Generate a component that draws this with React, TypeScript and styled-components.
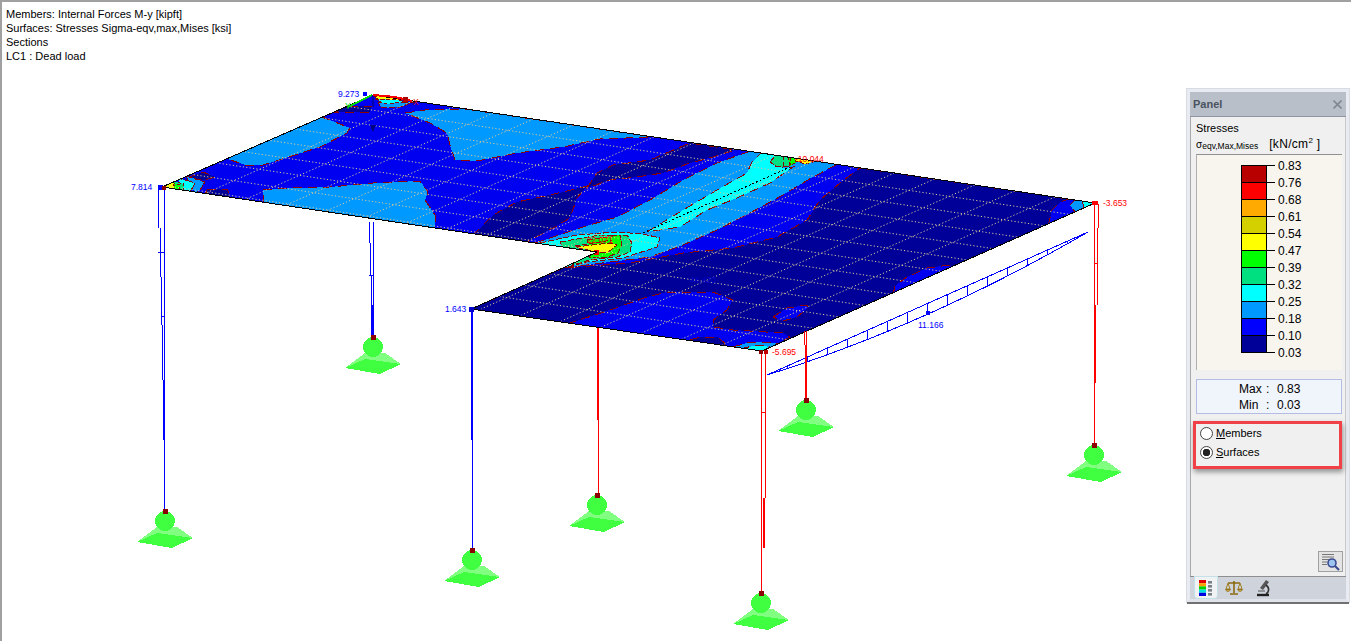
import styled, { createGlobalStyle } from "styled-components"

const GlobalStyle = createGlobalStyle`
    html, body, #root { margin: 0; padding: 0; height: 100%; }
    body { background: #fff; overflow: hidden; font-family: "Liberation Sans", Arial, sans-serif; }
`

type Region = { points: string; fill: string; dash?: string }

const OUTLINE = "373,95 1095,203 762,351 471,309 565,267 597,252 535,243 162,187"

const REGIONS: Region[] = [
    // light areas on the back plate
    { fill: "#0099ff", points: "405,113 425,110 465,109 653,137 600,139 563,147 517,153 477,161 455,160 450,145 447,133 430,123" },
    { fill: "#0099ff", points: "322,117 340,124 350,128 347,133 320,147 263,165 245,165 225,158" },
    { fill: "#0099ff", points: "263,190 287,188 330,187 373,183 420,181 428,192 425,200 435,215 435,232 263,206" },
    // navy pockets
    { fill: "#000099", points: "587,188 597,173 613,165 650,160 690,143 735,150 713,157 690,163 663,173 637,177 610,180" },
    { fill: "#000099", points: "473,235 493,215 517,202 563,192 587,186 577,198 570,218 553,228 525,243" },
    { fill: "#000099", points: "336,112 345,106 372,106 370,112" },
    { fill: "#000099", points: "187,178 203,172 215,177 205,180" },
    { fill: "#000099", points: "207,190 227,189 232,200 205,195" },
    // front plate
    { fill: "#000099", points: "860,168 1095,203 762,351 471,309 563,268 630,263 683,253 733,248 777,237 807,220 820,200 840,183" },
    { fill: "#0000f0", points: "567,324 610,310 647,297 667,292 713,292 733,300 727,310 713,320 713,327 733,330 783,333 790,337 772,346 762,353" },
    { fill: "#000099", points: "690,340 700,337 717,337 725,343 722,348" },
    { fill: "#0000f0", points: "773,317 787,308 807,305 808,308 797,317 783,321" },
    { fill: "#0000f0", points: "893,295 895,286 907,277 927,268 950,265 952,269" },
    { fill: "#0099ff", points: "733,347 750,342 777,343 767,353" },
    { fill: "#00ffff", points: "740,349 757,345 770,347 760,352" },
    // right corner
    { fill: "#0000f0", points: "1048,226 1052,210 1060,202 1072,198 1080,214" },
    { fill: "#0099ff", points: "1070,205 1077,198 1083,200 1086,207 1075,212" },
    { fill: "#00ffff", points: "1082,199 1097,203 1084,209" },
    // central band
    { fill: "#0099ff", points: "535,243 583,227 617,217 650,200 683,180 717,163 753,150 840,163 813,177 783,195 750,213 717,230 683,245 650,257 610,262 563,268" },
    { fill: "#00ffff", points: "647,232 683,210 717,190 747,173 752,162 763,151 775,152 783,168 793,167 770,183 737,198 707,210 680,227 660,230" },
    { fill: "#00ffff", points: "540,243 577,235 617,232 643,234 660,238 657,247 623,258 587,262 563,268", dash: "6 2" },
    { fill: "#00e080", points: "770,162 777,154 790,155 795,162 790,166 777,167", dash: "6 2" },
    { fill: "#00ff00", points: "788,157 800,160 790,166", dash: "4 2" },
    { fill: "#ffff00", points: "795,157 820,160 805,164 795,161", dash: "4 2" },
    { fill: "#00e080", points: "560,242 600,235 627,235 632,243 630,252 617,257 590,260 573,265", dash: "6 2" },
    { fill: "#00ff00", points: "587,240 620,235 622,245 618,253 607,257 590,258", dash: "6 2" },
    { fill: "#ffff00", points: "575,247 610,243 617,245 607,253 597,252", dash: "6 2" },
    // left corner
    { fill: "#0099ff", points: "186,176 205,182 200,190 195,193", dash: "6 2" },
    { fill: "#00ffff", points: "178,178 195,183 190,192 181,190", dash: "4 2" },
    { fill: "#00e080", points: "173,181 184,184 183,191 176,190", dash: "3 2" },
    { fill: "#00ff00", points: "172,183 180,185 179,190 174,189", dash: "3 2" },
    { fill: "#ffff00", points: "162,187 173,181 175,190", dash: "2 2" },
    // top corner
    { fill: "#0099ff", points: "378,103 386,102 414,102 400,107 382,108", dash: "6 2" },
    { fill: "#00ffff", points: "375,99 395,99 405,102 385,104", dash: "4 2" },
    { fill: "#ffff00", points: "373,96 393,97 402,100 378,99", dash: "4 2" }
]

const SUPPORTS: [number, number][] = [[165, 511], [373, 337], [472, 550], [597, 495], [761, 593], [806, 400], [1094, 445]]

const LEGEND = ["#b80000", "#ff0000", "#ffaa00", "#d4d000", "#ffff00", "#00ff00", "#00e080", "#00ffff", "#0099ff", "#0000ff", "#000099"]
const VALUES = ["0.83", "0.76", "0.68", "0.61", "0.54", "0.47", "0.39", "0.32", "0.25", "0.18", "0.10", "0.03"]

// grid lines of the mesh, plain parallel projection
const gridLines = () => {
    const out: string[] = []
    const a = [373, 95], ab = [722, 108], ad = [-333, 148]
    for (let i = 1; i < 18; i++) {
        const x = a[0] + ab[0] * i / 18, y = a[1] + ab[1] * i / 18
        out.push(`M${x} ${y}L${x + ad[0]} ${y + ad[1]}`)
    }
    for (let i = 1; i < 13; i++) {
        const x = a[0] + ad[0] * i / 13, y = a[1] + ad[1] * i / 13
        out.push(`M${x} ${y}L${x + ab[0]} ${y + ab[1]}`)
    }
    return out.join("")
}

// member diagram of the long beam: straight axis, parabola below
const beam = () => {
    const x0 = 767, y0 = 375, x1 = 1088, y1 = 232
    let bottom = `M${x0} ${y0}`, rungs = ""
    for (let i = 1; i <= 16; i++) {
        const t = i / 16
        const x = x0 + (x1 - x0) * t, y = y0 + (y1 - y0) * t
        const d = 43 * t * (1 - t)
        bottom += `L${x} ${y + d}`
        if (i < 16) rungs += `M${x} ${y}V${y + d}`
    }
    return { axis: `M${x0} ${y0}L${x1} ${y1}`, bottom, rungs }
}

const Support = ({ x, y }: { x: number; y: number }) => (
    <g shapeRendering="crispEdges">
        <polygon points={`${x - 28},${y + 31} ${x - 8},${y + 16} ${x + 12},${y + 16} ${x + 28},${y + 27} ${x + 7},${y + 37}`} fill="#80ff80" />
        <polygon points={`${x - 28},${y + 31} ${x - 8},${y + 22} ${x + 28},${y + 27} ${x + 7},${y + 37}`} fill="#40ff40" />
        <circle cx={x} cy={y + 10} r={10} fill="#40ff40" />
        <rect x={x - 2.5} y={y - 2} width={5} height={5} fill="#8b0000" />
    </g>
)

const Scene = () => {
    const b = beam()
    return (
        <Drawing viewBox="0 0 1351 641" width={1351} height={641}>
            <defs>
                <clipPath id="plate"><polygon points={OUTLINE} /></clipPath>
            </defs>
            <g clipPath="url(#plate)" shapeRendering="crispEdges">
                <polygon points={OUTLINE} fill="#0000f0" />
                {REGIONS.map((r, i) => (
                    <polygon key={i} points={r.points} fill={r.fill} stroke="#8c0000" strokeWidth={1} strokeDasharray={r.dash ?? "9 6"} />
                ))}
                <path d={gridLines()} fill="none" stroke="#d8c898" strokeWidth={1} strokeDasharray="1.2 2.2" shapeRendering="auto" />
                <path d="M643 233L790 167" fill="none" stroke="#000" strokeWidth={1} strokeDasharray="2 2" />
                <path d="M560 260L600 252M575 246L612 240M783 155V166M790 156V165" stroke="#8c0000" strokeDasharray="5 2" fill="none" />
                <rect x={594} y={250} width={5} height={5} fill="#ff0000" />
            </g>
            <polygon points={OUTLINE} fill="none" stroke="#000" strokeWidth={1} shapeRendering="crispEdges" />

            <g fill="none" stroke="#0000ff" strokeWidth={1} shapeRendering="crispEdges">
                <path d="M164 188V511M158 188V228M160 228V277M161 277V325M162 325V380M163 380V440M158 252H164M161 316H164" />
                <path d="M373 222V337M369 222V243M370 243V275M371 275V305M369 275H373" />
                <path d="M372 305V337" strokeWidth={2} />
                <path d="M471.5 309V440" strokeWidth={2} />
                <path d="M472 440V550" />
                <path d={b.axis} />
                <path d={b.bottom} />
                <path d={b.rungs} />
            </g>
            <g fill="none" stroke="#ff0000" strokeWidth={1} shapeRendering="crispEdges">
                <path d="M598 328V420" strokeWidth={2} />
                <path d="M598 420V495" />
                <path d="M761 352V593M765 352V498M761 412H765" />
                <path d="M764 498V548" strokeWidth={2} />
                <path d="M806 345V400" strokeWidth={2} />
                <path d="M806 331V345M804 331V345" />
                <path d="M1094 204V445M1098 204V228M1097 228V305M1094 263H1097" />
                <path d="M1095 305V383" strokeWidth={2} />
            </g>

            {SUPPORTS.map(([x, y]) => <Support key={x} x={x} y={y} />)}

            <g shapeRendering="crispEdges">
                <rect x={158} y={185} width={5} height={5} fill="#0000ff" />
                <rect x={162} y={186} width={4} height={4} fill="#8b0000" />
                <rect x={363} y={92} width={4} height={4} fill="#0000ff" />
                <rect x={469} y={307} width={5} height={5} fill="#0000cc" />
                <rect x={759} y={350} width={4} height={4} fill="#8b0000" />
                <rect x={764} y={350} width={4} height={4} fill="#c00000" />
                <rect x={1092} y={201} width={6} height={4} fill="#ff0000" />
                <rect x={926} y={311} width={4} height={4} fill="#0000ff" />
                <path d="M373 95V107" stroke="#0000aa" strokeWidth={2} fill="none" />
                <polygon points="370,125 376,125 373,132" fill="#000080" />
                <path d="M373 95L395 97L412 101" stroke="#ff0000" strokeWidth={2} fill="none" />
                <rect x={403} y={97} width={5} height={5} fill="#b00000" />
                <path d="M348 107L372 95" stroke="#00e000" strokeWidth={2} fill="none" />
            </g>

            <SceneLabel x={131} y={190} $color="#0000ff">7.814</SceneLabel>
            <SceneLabel x={338} y={97} $color="#0000ff">9.273</SceneLabel>
            <SceneLabel x={445} y={312} $color="#0000ff">1.643</SceneLabel>
            <SceneLabel x={918} y={328} $color="#0000ff">11.166</SceneLabel>
            <SceneLabel x={690} y={283} $color="#0000cc">44.420</SceneLabel>
            <SceneLabel x={772} y={355} $color="#ff0000">-5.695</SceneLabel>
            <SceneLabel x={1103} y={206} $color="#ff0000">-3.653</SceneLabel>
            <SceneLabel x={795} y={162} $color="#ff0000">-10.044</SceneLabel>
            <SceneLabel x={587} y={243} $color="#ff0000">22.071</SceneLabel>
            <SceneLabel x={345} y={109} $color="#00d000">Y</SceneLabel>
            <SceneLabel x={413} y={105} $color="#e00000">X</SceneLabel>
        </Drawing>
    )
}

const LegendIcon = () => (
    <svg width="16" height="18" viewBox="0 0 16 18">
        {["#e00000", "#ffa000", "#00d000", "#00e0e0", "#0000e0"].map((c, i) => (
            <rect key={c} x="1" y={1 + i * 3.2} width="7" height="3.2" fill={c} />
        ))}
        {[0, 1, 2, 3].map(i => <rect key={i} x="10" y={2 + i * 4} width="4" height="2.6" fill="#7a8088" />)}
    </svg>
)

const ScalesIcon = () => (
    <svg width="18" height="16" viewBox="0 0 18 16" fill="none">
        <path d="M9 1V13M3 3H15M5 14H13" stroke="#8a6a10" strokeWidth="1.6" />
        <path d="M3 3L1 9H5ZM15 3L13 9H17Z" stroke="#a08020" strokeWidth="1" />
        <path d="M0.5 9.5C1.5 12 4.5 12 5.5 9.5ZM12.5 9.5C13.5 12 16.5 12 17.5 9.5Z" fill="#d8b040" stroke="#7a5c10" strokeWidth=".7" />
    </svg>
)

const MicroscopeIcon = () => (
    <svg width="16" height="18" viewBox="0 0 16 18" fill="none">
        <path d="M11 1L14 3L8 11L5 9Z" fill="#555" />
        <path d="M3 12H10" stroke="#777" strokeWidth="1.4" />
        <path d="M11 6C15 9 14 13 11 15" stroke="#333" strokeWidth="1.6" />
        <path d="M2 16H14" stroke="#222" strokeWidth="2.4" />
    </svg>
)

const FindIcon = () => (
    <svg width="20" height="18" viewBox="0 0 20 18" fill="none">
        <path d="M1 1.5H13M1 4H13M1 6.5H8M1 9H6M1 11.5H6" stroke="#777" strokeWidth="1" />
        <circle cx="11" cy="10" r="4" fill="#9cc4f0" stroke="#3a4a90" strokeWidth="1.6" />
        <path d="M14 13L18 17" stroke="#3a4a90" strokeWidth="2.2" />
    </svg>
)

const App = () => (
    <>
        <GlobalStyle />
        <Viewport>
            <Scene />
            <Info>
                <div>Members: Internal Forces M-y [kipft]</div>
                <div>Surfaces: Stresses Sigma-eqv,max,Mises [ksi]</div>
                <div>Sections</div>
                <div>LC1 : Dead load</div>
            </Info>
            <Panel>
                <TitleBar>
                    <span>Panel</span>
                    <svg width="9" height="9" viewBox="0 0 9 9"><path d="M0.5 0.5L8.5 8.5M8.5 0.5L0.5 8.5" stroke="#808890" strokeWidth="1.6" /></svg>
                </TitleBar>
                <Body>
                    <Heading>Stresses</Heading>
                    <Quantity>
                        <small>σ<sub>eqv,Max,Mises</sub></small>
                        <span>[kN/cm<sup>2</sup> ]</span>
                    </Quantity>
                    <LegendBox>
                        <ColorBar>
                            {LEGEND.map(c => <Swatch key={c} $color={c} />)}
                        </ColorBar>
                        <Ticks>
                            {VALUES.map(v => <Tick key={v}>{v}</Tick>)}
                        </Ticks>
                    </LegendBox>
                    <Extremes>
                        <ExtremeRow><b>Max</b><i>:</i><span>0.83</span></ExtremeRow>
                        <ExtremeRow><b>Min</b><i>:</i><span>0.03</span></ExtremeRow>
                    </Extremes>
                    <Radios>
                        <RadioRow>
                            <Radio />
                            <span><u>M</u>embers</span>
                        </RadioRow>
                        <RadioRow>
                            <Radio $checked />
                            <span><u>S</u>urfaces</span>
                        </RadioRow>
                    </Radios>
                    <Spacer />
                    <FindButton><FindIcon /></FindButton>
                </Body>
                <Tabs>
                    <Tab $active><LegendIcon /></Tab>
                    <Tab><ScalesIcon /></Tab>
                    <Tab $wide><MicroscopeIcon /></Tab>
                </Tabs>
            </Panel>
        </Viewport>
    </>
)

export default App

const Viewport = styled.div`
    position: relative;
    width: 1351px;
    height: 641px;
    box-sizing: border-box;
    border-top: 2px solid #a0a0a0;
    border-left: 2px solid #a0a0a0;
    overflow: hidden;
    background: #fff;
`

const Drawing = styled.svg`
    display: block;
    margin: -2px 0 0 -2px;
`

const SceneLabel = styled.text<{ $color: string }>`
    font-family: "Liberation Sans", Arial, sans-serif;
    font-size: 8.5px;
    fill: ${({ $color }) => $color};
`

const Info = styled.div`
    position: absolute;
    left: 4px;
    top: 5px;
    font-size: 11px;
    line-height: 14px;
    color: #000;
`

const Panel = styled.div`
    position: absolute;
    left: 1185px;
    top: 87px;
    width: 162px;
    height: 513px;
    box-sizing: border-box;
    display: flex;
    flex-direction: column;
    border: 3px solid #e8ecf2;
    border-bottom-color: #e0e4ea;
    box-shadow: 0 2px 0 #707070, 0 0 0 1px #d8dce2;
    background: #f0f0f0;
    font-size: 12px;
    color: #000;
`

const TitleBar = styled.div`
    flex: 0 0 24px;
    display: flex;
    align-items: center;
    justify-content: space-between;
    padding: 0 4px 0 3px;
    background: #b9bfc9;
    color: #4a5360;
    font-size: 11px;
    font-weight: bold;
    border-bottom: 1px solid #8e96a2;
`

const Body = styled.div`
    flex: 1;
    display: flex;
    flex-direction: column;
    padding: 4px 3px 4px 5px;
    border-left: 1px solid #a8a8a8;
    border-right: 1px solid #c8c8c8;
    min-height: 0;
`

const Heading = styled.div`
    font-size: 11px;
    line-height: 14px;
`

const Quantity = styled.div`
    display: flex;
    align-items: baseline;
    gap: 11px;
    height: 19px;
    line-height: 19px;
    white-space: nowrap;
    small { font-size: 10px; }
    sub { font-size: 8.5px; vertical-align: -1px; }
    span { font-size: 12px; letter-spacing: 0.3px; }
    sup { font-size: 8px; line-height: 0; }
`

const LegendBox = styled.div`
    flex: 0 0 216px;
    box-sizing: border-box;
    display: flex;
    align-items: flex-start;
    padding: 2px 0 0 44px;
    background: #f8f5ef;
    border-top: 1px solid #909090;
    border-left: 1px solid #b0b0b0;
`

const ColorBar = styled.div`
    display: flex;
    flex-direction: column;
    width: 24px;
    margin-top: 8px;
    border: 1px solid #000;
    border-bottom: 0;
`

const Swatch = styled.div<{ $color: string }>`
    height: 16px;
    background: ${({ $color }) => $color};
    border-bottom: 1px solid #000;
`

const Ticks = styled.div`
    display: flex;
    flex-direction: column;
`

const Tick = styled.div`
    display: flex;
    align-items: center;
    height: 17px;
    font-size: 12px;
    &::before {
        content: "";
        width: 8px;
        height: 1px;
        margin-right: 3px;
        background: #000;
    }
`

const Extremes = styled.div`
    margin-top: 9px;
    height: 35px;
    box-sizing: border-box;
    padding-top: 1px;
    background: #f0f4fb;
    border: 1px solid #b4bce4;
    font-size: 12px;
`

const ExtremeRow = styled.div`
    display: grid;
    grid-template-columns: 27px 11px 40px;
    line-height: 16px;
    padding-left: 42px;
    b { font-weight: normal; }
    i { font-style: normal; }
`

const Radios = styled.div`
    margin: 7px 0 0 -3px;
    width: 149px;
    height: 48px;
    box-sizing: border-box;
    display: flex;
    flex-direction: column;
    justify-content: center;
    gap: 5px;
    padding: 0 0 5px 4px;
    border: 3px solid #f04048;
    box-shadow: 1px 3px 5px rgba(0, 0, 0, 0.4);
    font-size: 11px;
`

const RadioRow = styled.label`
    display: flex;
    align-items: center;
    gap: 3px;
    height: 14px;
`

const Radio = styled.span<{ $checked?: boolean }>`
    width: 13px;
    height: 13px;
    box-sizing: border-box;
    border-radius: 50%;
    border: 1px solid #444;
    background: radial-gradient(circle, ${({ $checked }) => ($checked ? "#222 0 3.5px, #fff 4px" : "#fff 0 100%")});
`

const Spacer = styled.div`
    flex: 1;
`

const FindButton = styled.div`
    align-self: flex-end;
    width: 25px;
    height: 21px;
    box-sizing: border-box;
    display: flex;
    align-items: center;
    justify-content: center;
    background: #e4e4e4;
    border: 1px solid #a0a0a0;
    margin-right: -1px;
`

const Tabs = styled.div`
    flex: 0 0 23px;
    box-sizing: border-box;
    display: flex;
    align-items: flex-start;
    gap: 4px;
    padding-left: 5px;
    background: #cfd4dc;
    border-top: 1px solid #8e8e8e;
`

const Tab = styled.div<{ $active?: boolean; $wide?: boolean }>`
    width: 22px;
    height: 21px;
    margin-right: ${({ $active }) => ($active ? "2px" : "0")};
    margin-left: ${({ $wide }) => ($wide ? "3px" : "0")};
    display: flex;
    align-items: center;
    justify-content: center;
    background: ${({ $active }) => ($active ? "#f0f2f4" : "transparent")};
    border-radius: 0 0 3px 3px;
    box-shadow: ${({ $active }) => ($active ? "0 0 0 1px #c4e0e8" : "none")};
`
